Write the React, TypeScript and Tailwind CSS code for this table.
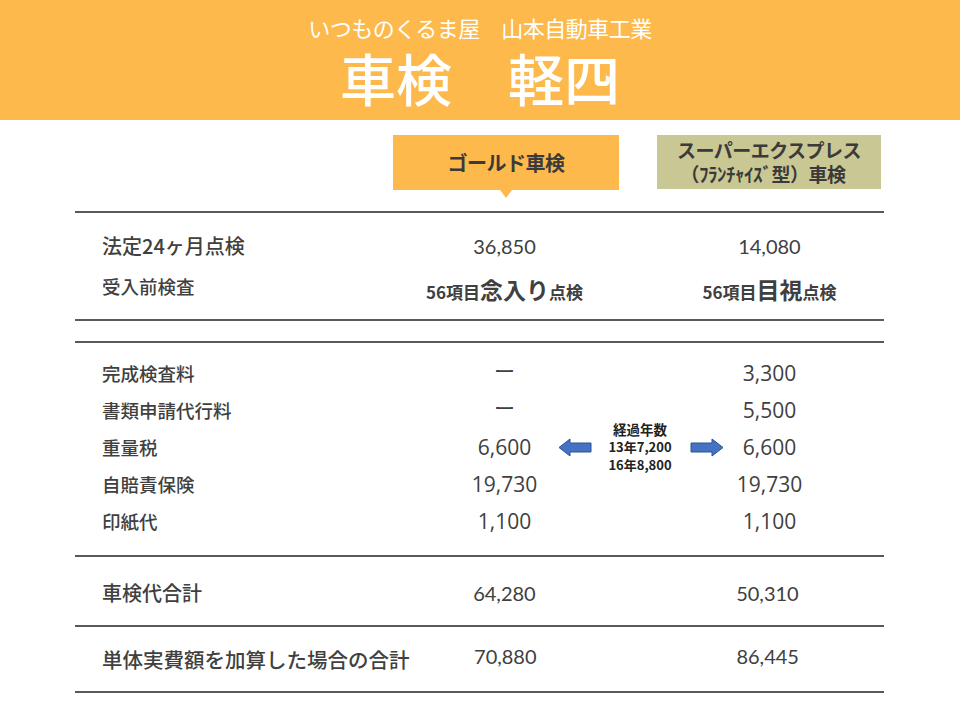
const jp = "font-['Noto_Sans_CJK_JP',sans-serif]";
const num = "font-['Lato','Noto_Sans_CJK_JP',sans-serif]";

const ArrowLeft = () => (
  <svg width="34" height="19" viewBox="0 0 34 19">
    <polygon points="1,9.5 12,1 12,5 33,5 33,14 12,14 12,18" fill="#4472C4" stroke="#2F528F" strokeWidth="1" />
  </svg>
);

const ArrowRight = () => (
  <svg width="34" height="19" viewBox="0 0 34 19">
    <polygon points="33,9.5 22,1 22,5 1,5 1,14 22,14 22,18" fill="#4472C4" stroke="#2F528F" strokeWidth="1" />
  </svg>
);

const rows2 = [
  { label: '完成検査料', a: 'ー', b: '3,300' },
  { label: '書類申請代行料', a: 'ー', b: '5,500' },
  { label: '重量税', a: '6,600', b: '6,600' },
  { label: '自賠責保険', a: '19,730', b: '19,730' },
  { label: '印紙代', a: '1,100', b: '1,100' },
];

export default function App() {
  return (
    <div className={`w-[960px] h-[720px] bg-white text-[#404040] ${jp}`}>
      {/* header */}
      <div className="h-[120px] bg-[#FDB94B] flex flex-col items-center pt-[14px] text-white">
        <div className="text-[22px] leading-[26px] tracking-[-0.5px]">いつものくるま屋　山本自動車工業</div>
        <div className="text-[56px] leading-[58px] font-medium mt-[8px]">車検　軽四</div>
      </div>

      {/* column headers */}
      <div className="flex pl-[393px] pt-[15px]">
        <div className="relative w-[226px] h-[55px] bg-[#FDB94B] flex items-center justify-center">
          <span className="text-[20px] font-bold text-[#3a3a3a] tracking-[-0.5px]">ゴールド車検</span>
          <div className="absolute left-[107px] top-[55px] w-0 h-0 border-l-[6px] border-r-[6px] border-t-[8px] border-l-transparent border-r-transparent border-t-[#FDB94B]" />
        </div>
        <div className="ml-[38px] w-[224px] h-[54px] bg-[#C9C793] flex flex-col items-center justify-center leading-[24px] text-[#3a3a3a] font-bold">
          <span className="text-[19px] tracking-[-0.5px]">スーパーエクスプレス</span>
          <span className="text-[19px] tracking-[-0.5px] pr-[12px]">（ﾌﾗﾝﾁｬｲｽﾞ型）車検</span>
        </div>
      </div>

      {/* table */}
      <div className="ml-[75px] w-[809px] mt-[21px]">
        {/* section 1 */}
        <div className="border-t-2 border-b-2 border-[#5a5a5a] pt-[13px] pb-[7px]">
          <div className="flex items-center h-[40px]">
            <div className="w-[318px] pl-[27px] text-[20px] font-medium">法定24ヶ月点検</div>
            <div className={`w-[226px] text-center text-[20px] ${num}`}>36,850</div>
            <div className="w-[38px]" />
            <div className={`w-[230px] text-center text-[20px] ${num}`}>14,080</div>
          </div>
          <div className="flex items-center h-[46px]">
            <div className="w-[318px] pl-[27px] text-[18.5px] font-medium -mt-[4px]">受入前検査</div>
            <div className="w-[226px] text-center font-bold">
              <span className="text-[17px]">56項目</span>
              <span className="text-[23px]">念入り</span>
              <span className="text-[17px]">点検</span>
            </div>
            <div className="w-[38px]" />
            <div className="w-[230px] text-center font-bold">
              <span className="text-[17px]">56項目</span>
              <span className="text-[23px]">目視</span>
              <span className="text-[17px]">点検</span>
            </div>
          </div>
        </div>

        {/* section 2 */}
        <div className="relative mt-[20px] border-t-2 border-b-2 border-[#5a5a5a] pt-[12px] pb-[15px]">
          {rows2.map((r) => (
            <div key={r.label} className="flex items-center h-[37px]">
              <div className="w-[318px] pl-[27px] text-[18.5px] font-medium">{r.label}</div>
              <div className={`w-[226px] text-center text-[21px] ${r.a === 'ー' ? 'text-[15px] -mt-[6px] ' + jp : "font-['Open_Sans',sans-serif]"}`}>{r.a}</div>
              <div className="w-[38px]" />
              <div className="w-[230px] text-center text-[21px] font-['Open_Sans',sans-serif]">{r.b}</div>
            </div>
          ))}
          <div className="absolute left-[483px] top-[77px] flex items-center">
            <ArrowLeft />
            <div className="w-[76px] ml-[10px] mr-[12px] flex flex-col items-center text-[13px] font-bold leading-[18px] text-[#222]">
              <span className="text-[13.5px]">経過年数</span>
              <span>13年7,200</span>
              <span>16年8,800</span>
            </div>
            <ArrowRight />
          </div>
        </div>

        {/* section 3 */}
        <div className="flex items-center h-[70px] pt-[4px] border-b-2 border-[#5a5a5a]">
          <div className="w-[318px] pl-[27px] text-[20px] font-medium">車検代合計</div>
          <div className={`w-[226px] text-center text-[20px] ${num}`}>64,280</div>
          <div className="w-[38px]" />
          <div className={`w-[230px] text-center text-[20px] pr-[4px] ${num}`}>50,310</div>
        </div>

        {/* section 4 */}
        <div className="flex items-center h-[66px] border-b-2 border-[#5a5a5a]">
          <div className="w-[318px] pl-[27px] text-[20.5px] font-medium whitespace-nowrap">単体実費額を加算した場合の合計</div>
          <div className={`w-[226px] text-center text-[20px] -mt-[6px] ${num}`}>70,880</div>
          <div className="w-[38px]" />
          <div className={`w-[230px] text-center text-[20px] pr-[4px] -mt-[6px] ${num}`}>86,445</div>
        </div>
      </div>
    </div>
  );
}
